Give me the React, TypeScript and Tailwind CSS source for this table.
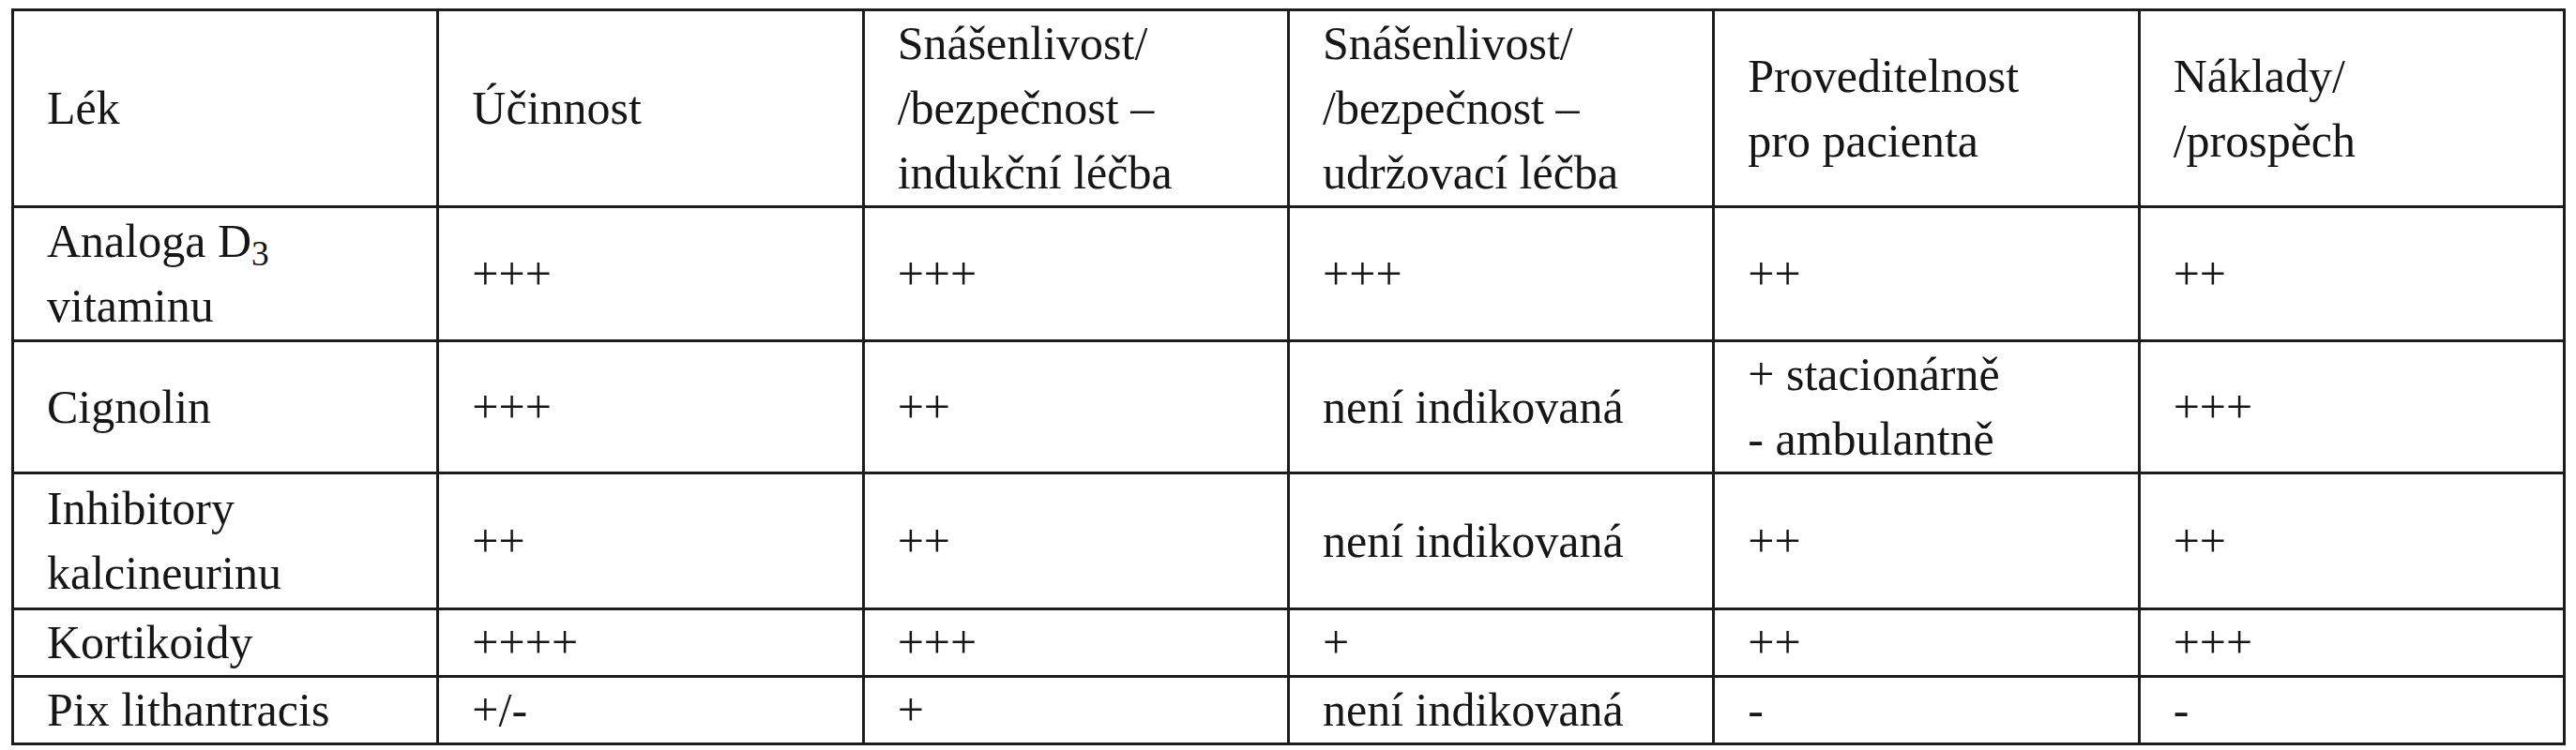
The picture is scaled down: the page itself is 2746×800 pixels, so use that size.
import type { ReactNode } from 'react'

type Row = { drug: ReactNode; cells: ReactNode[]; h: string }

const header = [
  'Lék',
  'Účinnost',
  <>Snášenlivost/<br />/bezpečnost –<br />indukční léčba</>,
  <>Snášenlivost/<br />/bezpečnost –<br />udržovací léčba</>,
  <>Proveditelnost<br />pro pacienta</>,
  <>Náklady/<br />/prospěch</>,
]

const rows: Row[] = [
  {
    drug: <>Analoga D<sub>3</sub><br />vitaminu</>,
    cells: ['+++', '+++', '+++', '++', '++'],
    h: 'h-[143px]',
  },
  {
    drug: 'Cignolin',
    cells: ['+++', '++', 'není indikovaná', <>+ stacionárně<br />- ambulantně</>, '+++'],
    h: 'h-[140px]',
  },
  {
    drug: <>Inhibitory<br />kalcineurinu</>,
    cells: ['++', '++', 'není indikovaná', '++', '++'],
    h: 'h-[145px]',
  },
  { drug: 'Kortikoidy', cells: ['++++', '+++', '+', '++', '+++'], h: 'h-[70px]' },
  { drug: 'Pix lithantracis', cells: ['+/-', '+', 'není indikovaná', '-', '-'], h: 'h-[71px]' },
]

const cell = 'border-[3px] border-[#1c1c1c] pl-[35px] pr-2 py-0 align-middle text-left font-normal'

export default function App() {
  return (
    <div className="min-h-[800px] bg-white pt-[9px] pl-[12px]">
      <table
        className="w-[2723px] table-fixed border-collapse text-[50px] leading-[69px] text-[#161616]"
        style={{ fontFamily: '"Liberation Serif", "Times New Roman", serif' }}
      >
        <thead>
          <tr className="h-[208px]">
            {header.map((h, i) => (
              <th key={i} className={cell}>
                {h}
              </th>
            ))}
          </tr>
        </thead>
        <tbody>
          {rows.map((r, i) => (
            <tr key={i} className={r.h}>
              <td className={cell}>{r.drug}</td>
              {r.cells.map((c, j) => (
                <td key={j} className={cell}>
                  {c}
                </td>
              ))}
            </tr>
          ))}
        </tbody>
      </table>
    </div>
  )
}
